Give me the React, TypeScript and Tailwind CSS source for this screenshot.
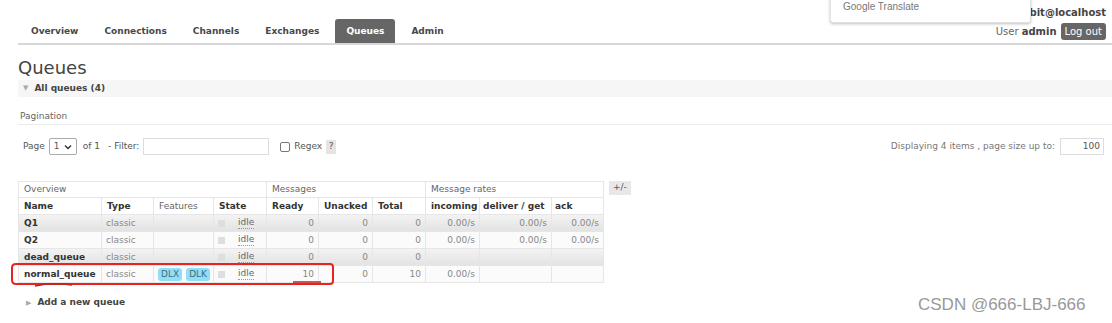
import React from "react";

const tabs = ["Overview", "Connections", "Channels", "Exchanges", "Queues", "Admin"];

type Row = {
  name: string;
  features: string[];
  ready: string;
  unacked: string;
  total: string;
  incoming: string;
  deliver: string;
  ack: string;
};

const rows: Row[] = [
  { name: "Q1", features: [], ready: "0", unacked: "0", total: "0", incoming: "0.00/s", deliver: "0.00/s", ack: "0.00/s" },
  { name: "Q2", features: [], ready: "0", unacked: "0", total: "0", incoming: "0.00/s", deliver: "0.00/s", ack: "0.00/s" },
  { name: "dead_queue", features: [], ready: "0", unacked: "0", total: "0", incoming: "", deliver: "", ack: "" },
  { name: "normal_queue", features: ["DLX", "DLK"], ready: "10", unacked: "0", total: "10", incoming: "0.00/s", deliver: "", ack: "" },
];

const th = "border border-[#e6e6e6] px-[5px] py-0 text-left font-bold text-[#333]";
const td = "border border-[#e6e6e6] px-[4px] py-0 text-[#888]";

export default function App() {
  return (
    <div
      className="relative h-[323px] w-[1112px] overflow-hidden bg-white text-[9px] text-[#444]"
      style={{ fontFamily: '"DejaVu Sans", Verdana, sans-serif' }}
    >
      {/* header + nav */}
      <div className="ml-[18px] flex h-[45px] justify-between border-b-2 border-[#d8d8d8]">
        <nav className="flex items-end">
          {tabs.map((t) =>
            t === "Queues" ? (
              <span key={t} className="mx-[3px] flex h-[24px] items-center rounded-t-[3px] bg-[#666] px-[11px] pt-[2px] font-bold text-white">
                {t}
              </span>
            ) : (
              <span key={t} className="flex h-[24px] items-center px-[13px] pt-[2px] font-bold text-[#484848]">
                {t}
              </span>
            )
          )}
        </nav>
        <div className="flex flex-col items-end pr-[6px] pt-[6px] text-[10px]">
          <span className="font-bold leading-[14px] text-[#444]">rabbit@localhost</span>
          <div className="mt-[3px] flex items-center gap-[4px]">
            <span className="text-[#666]">
              User <b className="text-[#444]">admin</b>
            </span>
            <span className="rounded-[3px] bg-[#666] px-[4px] py-[1px] text-white">Log out</span>
          </div>
        </div>
      </div>

      {/* google translate popup */}
      <div className="absolute left-[830px] top-[-4px] h-[27px] w-[201px] rounded-b-[3px] border border-[#e2e2e2] bg-white shadow-[0_1px_3px_rgba(0,0,0,0.25)]">
        <span className="absolute left-[12px] top-[4px] text-[10px] leading-[12px] text-[#777]" style={{ fontFamily: '"Liberation Sans", Arial, sans-serif' }}>
          Google Translate
        </span>
      </div>

      <div className="ml-[18px]">
        <h1 className="mt-[12px] text-[18px] font-normal leading-[22px] text-[#444]">Queues</h1>
        <div className="mt-[1px] flex h-[17px] items-center bg-[#f6f6f6] pl-[5px]">
          <span className="mr-[6px] text-[7px] text-[#aaa]">▼</span>
          <span className="font-bold text-[#444]">All queues (4)</span>
        </div>

        <div className="border-b border-[#ececec] pb-[1px] pl-[2px] pt-[12px] leading-[14px] text-[#666]">Pagination</div>

        <div className="mt-[13px] flex h-[17px] items-center justify-between pr-[8px] text-[#555]">
          <div className="flex items-center pl-[5px]">
            <span>Page</span>
            <span className="ml-[4px] flex h-[17px] w-[28px] items-center justify-between rounded-[2px] border border-[#aaa] px-[4px]">
              <span>1</span>
              <svg width="8" height="6" viewBox="0 0 8 6">
                <path d="M1 1.5 L4 4.5 L7 1.5" fill="none" stroke="#333" strokeWidth="1.4" />
              </svg>
            </span>
            <span className="ml-[6px]">of 1</span>
            <span className="ml-[8px]">- Filter:</span>
            <span className="ml-[4px] h-[17px] w-[126px] border border-[#ddd] bg-white" />
            <span className="ml-[11px] h-[10px] w-[10px] rounded-[2px] border border-[#777]" />
            <span className="ml-[4px]">Regex</span>
            <span className="ml-[4px] flex h-[14px] w-[10px] items-center justify-center bg-[#e4e4e4] text-[#555]">?</span>
          </div>
          <div className="flex items-center">
            <span className="text-[#777]">Displaying 4 items , page size up to:</span>
            <span className="ml-[5px] flex h-[17px] w-[44px] items-center justify-end border border-[#ddd] pr-[3px] text-[#555]">100</span>
          </div>
        </div>

        <div className="mt-[26px] flex items-start">
          <table className="w-[585px] table-fixed border-collapse whitespace-nowrap leading-[15px]">
            <colgroup>
              <col className="w-[83px]" />
              <col className="w-[52px]" />
              <col className="w-[60px]" />
              <col className="w-[53px]" />
              <col className="w-[52px]" />
              <col className="w-[54px]" />
              <col className="w-[53px]" />
              <col className="w-[54px]" />
              <col className="w-[72px]" />
              <col className="w-[52px]" />
            </colgroup>
            <thead>
              <tr className="h-[16px]">
                <th colSpan={4} className="border border-[#e6e6e6] px-[5px] py-0 text-left font-normal text-[#666]">Overview</th>
                <th colSpan={3} className="border border-[#e6e6e6] px-[5px] py-0 text-left font-normal text-[#666]">Messages</th>
                <th colSpan={3} className="border border-[#e6e6e6] px-[5px] py-0 text-left font-normal text-[#666]">Message rates</th>
              </tr>
              <tr className="h-[17px]">
                <th className={th}>Name</th>
                <th className={th}>Type</th>
                <th className="border border-[#e6e6e6] px-[5px] py-0 text-left font-normal text-[#666]">Features</th>
                <th className={th}>State</th>
                <th className={th}>Ready</th>
                <th className={th}>Unacked</th>
                <th className={th}>Total</th>
                <th className={th}>incoming</th>
                <th className={th + " pl-[3px]"}>deliver / get</th>
                <th className={th + " pl-[3px]"}>ack</th>
              </tr>
            </thead>
            <tbody>
              {rows.map((r, i) => (
                <tr
                  key={r.name}
                  className={i % 2 === 0 ? "h-[17px] bg-linear-to-b from-[#f3f3f3] to-[#e2e2e2]" : "h-[17px] bg-[#fbfbfb]"}
                >
                  <td className="border border-[#e6e6e6] px-[5px] py-0 font-bold text-[#333]">{r.name}</td>
                  <td className={td}>classic</td>
                  <td className={td}>
                    <div className="flex gap-[4px]">
                      {r.features.map((f) => (
                        <span key={f} className="rounded-[3px] bg-[#8fdff7] px-[3px] leading-[13px] text-[#4a6a7a]">
                          {f}
                        </span>
                      ))}
                    </div>
                  </td>
                  <td className={td}>
                    <div className="flex items-center">
                      <span className="h-[7px] w-[7px] bg-[#dedede]" />
                      <span className="ml-[13px] border-b border-dotted border-[#999] leading-[11px] text-[#666]">idle</span>
                    </div>
                  </td>
                  <td className={td + " text-right"}>{r.ready}</td>
                  <td className={td + " text-right"}>{r.unacked}</td>
                  <td className={td + " text-right"}>{r.total}</td>
                  <td className={td + " text-right"}>{r.incoming}</td>
                  <td className={td + " text-right"}>{r.deliver}</td>
                  <td className={td + " text-right"}>{r.ack}</td>
                </tr>
              ))}
            </tbody>
          </table>
          <span className="ml-[5px] flex h-[14px] items-center bg-[#e8e8e8] px-[4px] text-[#555]">+/-</span>
        </div>

        <div className="mt-[13px] flex h-[14px] items-center pl-[8px]">
          <span className="mr-[6px] text-[7px] text-[#aaa]">▶</span>
          <span className="font-bold text-[#444]">Add a new queue</span>
        </div>
      </div>

      {/* red annotation */}
      <svg className="pointer-events-none absolute left-0 top-0" width="1112" height="323">
        <path
          d="M16 264 L330 264 Q333 264 333 267 L333 281 Q333 284 330 284 L16 284 Q12 284 12 280 L12 268 Q12 264 16 264 Z"
          fill="none"
          stroke="#e8231f"
          strokeWidth="2"
        />
        <path d="M35 286 Q52 282 72 285" fill="none" stroke="#c0201c" strokeWidth="1.5" />
        <path d="M293 282 L321 282" fill="none" stroke="#c0201c" strokeWidth="1.5" />
      </svg>

      <span
        className="absolute left-[918px] top-[292px] text-[17px] text-[#999]"
        style={{ fontFamily: '"Liberation Sans", Arial, sans-serif' }}
      >
        CSDN @666-LBJ-666
      </span>
    </div>
  );
}
